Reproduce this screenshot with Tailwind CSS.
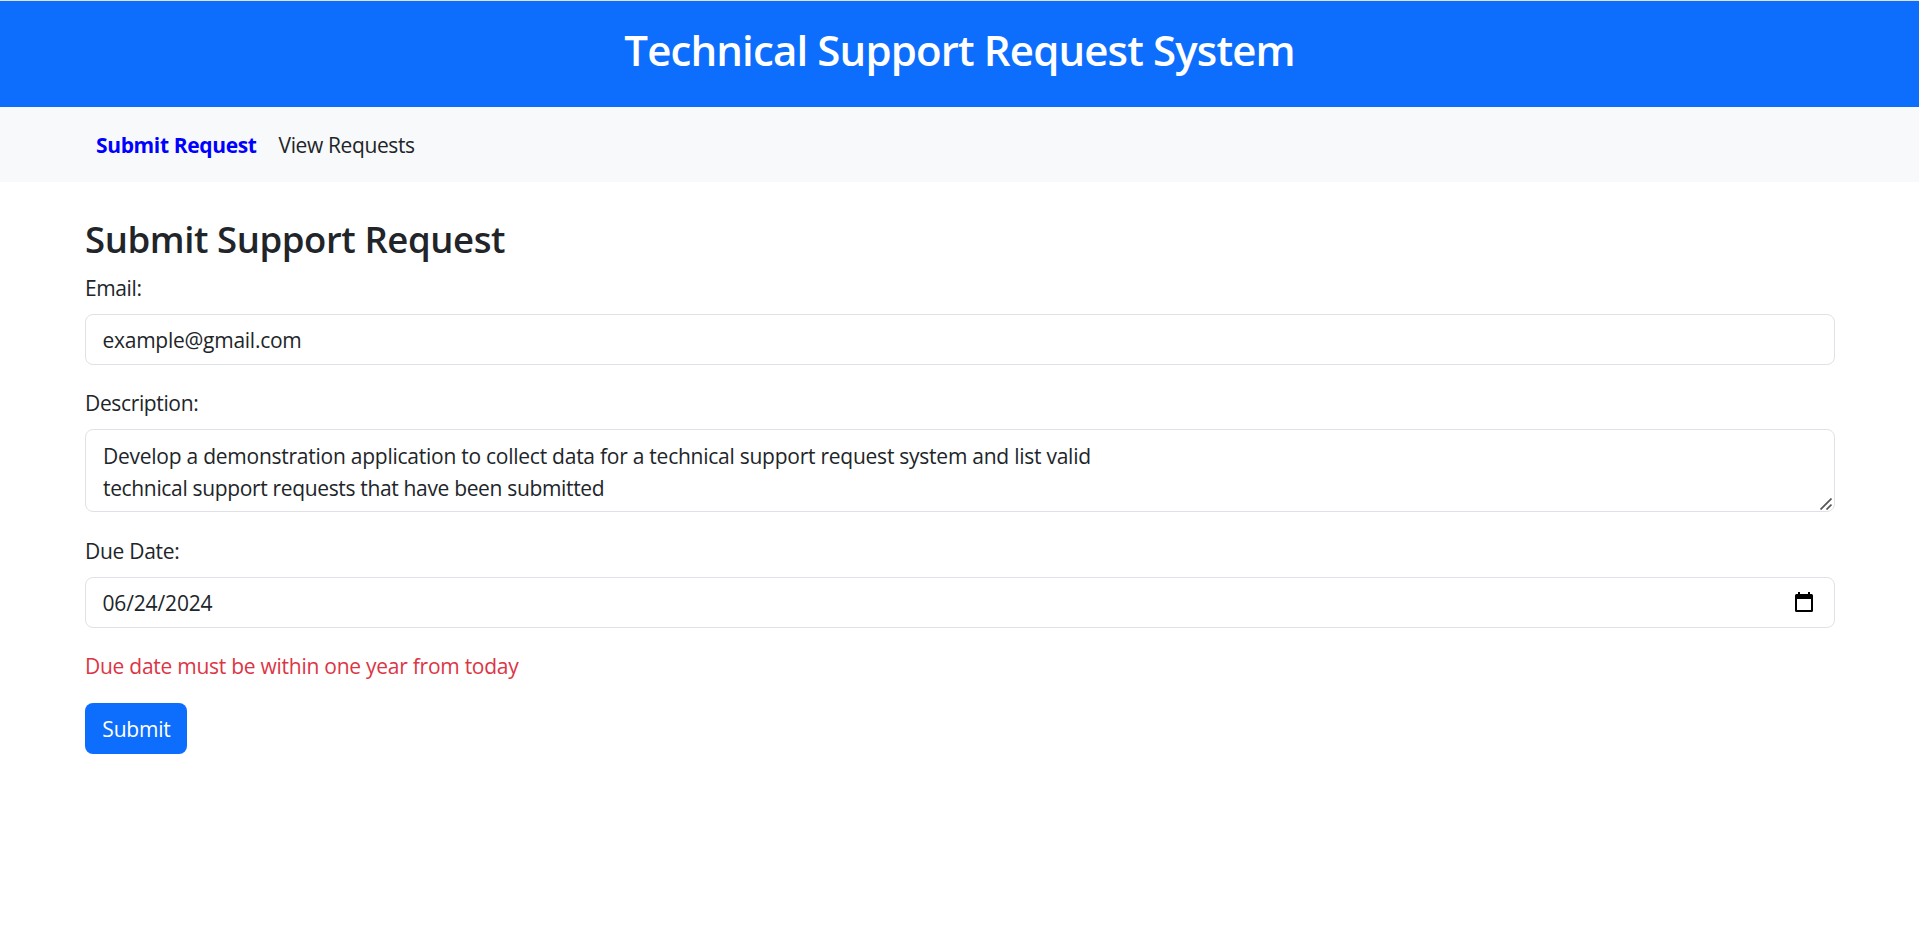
<!DOCTYPE html>
<html lang="en">
<head>
<meta charset="utf-8">
<title>Technical Support Request System</title>
<script src="https://cdn.jsdelivr.net/npm/@tailwindcss/browser@4"></script>
</head>
<body class="min-h-screen bg-white font-['Open_Sans',sans-serif] text-[21px] leading-8 text-[#212529]">
<header class="flex h-[107px] justify-center border-t border-[#dee2e6] bg-[#0d6efd] pt-[23px] text-white">
  <h1 class="whitespace-nowrap text-[42px] font-semibold leading-[52px] tracking-[-0.86px]">Technical Support Request System</h1>
</header>
<nav class="flex h-[75px] items-center gap-[22px] bg-[#f8f9fa] px-24 pt-px">
  <a href="#" class="font-bold tracking-[-0.36px] text-[#0000ff]">Submit Request</a>
  <a href="#" class="tracking-[-0.38px]">View Requests</a>
</nav>
<main class="px-[85px] pt-[35px]">
  <h2 class="mb-[11px] text-[36.5px] font-semibold leading-[44px] tracking-[-0.41px]">Submit Support Request</h2>
  <form class="flex flex-col items-stretch">
    <label for="email" class="mb-2.5 tracking-[-0.4px]">Email:</label>
    <input id="email" type="text" value="example@gmail.com" class="mb-[22px] h-[51px] w-[1750px] rounded-lg border border-[#dee2e6] px-[16.5px] tracking-[-0.26px]">

    <label for="description" class="mb-2.5 tracking-[-0.36px]">Description:</label>
    <div id="description" class="relative mb-[23px] h-[83px] w-[1750px] rounded-lg border border-[#dee2e6] px-[17px] pt-[10px]">
      <p class="tracking-[-0.25px]">Develop a demonstration application to collect data for a technical support request system and list valid</p>
      <p class="tracking-[-0.34px]">technical support requests that have been submitted</p>
      <svg class="absolute right-[2px] bottom-px h-3 w-3" viewBox="0 0 12 12" fill="none" stroke="#555" stroke-width="1.7"><path d="M.5 11.5 11.5.5M6.5 11.5l5-5"/></svg>
    </div>

    <label for="due" class="mb-2.5 tracking-[-0.29px]">Due Date:</label>
    <div id="due" class="mb-[22px] flex h-[51px] w-[1750px] items-center justify-between rounded-lg border border-[#dee2e6] pr-[21px] pl-[16.5px]">
      <span class="tracking-[-0.15px]">06/24/2024</span>
      <svg class="mt-3.5 h-5 w-[18px] self-start" viewBox="0 0 18 20"><path fill="#000" fill-rule="evenodd" d="M3 0h2v2h8V0h2v2h1.500a1.500 1.500 0 0 1 1.500 1.500v15a1.500 1.500 0 0 1-1.500 1.500h-15a1.500 1.500 0 0 1-1.500-1.500v-15a1.500 1.500 0 0 1 1.500-1.500H3zM2 7v11h14V7z"/></svg>
    </div>

    <p class="mb-[21px] tracking-[-0.26px] text-[#dc3545]">Due date must be within one year from today</p>
    <button type="button" class="h-[51px] w-[102px] rounded-lg bg-[#0d6efd] pl-px tracking-[-0.2px] text-white">Submit</button>
  </form>
</main>
</body>
</html>
